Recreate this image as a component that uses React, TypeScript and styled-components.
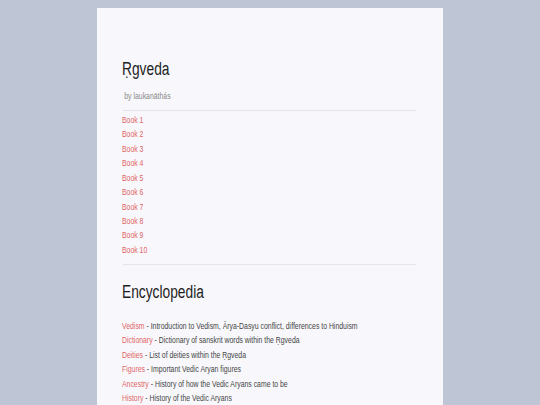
import styled, { createGlobalStyle, css } from "styled-components";

const GlobalStyle = createGlobalStyle`
  html, body {
    margin: 0;
    padding: 0;
    background: #bec5d4;
  }
  body {
    font-family: "Liberation Sans", Arial, sans-serif;
    color: #444;
  }
`;

// the type in this layout is set narrow, like a condensed face
const narrow = css`
  transform: scaleX(0.765);
  transform-origin: left center;
  white-space: nowrap;
`;

const books = Array.from({ length: 10 }, (_, i) => `Book ${i + 1}`);

const entries = [
  { name: "Vedism", text: "Introduction to Vedism, Ārya-Dasyu conflict, differences to Hinduism" },
  { name: "Dictionary", text: "Dictionary of sanskrit words within the Ṛgveda" },
  { name: "Deities", text: "List of deities within the Ṛgveda" },
  { name: "Figures", text: "Important Vedic Aryan figures" },
  { name: "Ancestry", text: "History of how the Vedic Aryans came to be" },
  { name: "History", text: "History of the Vedic Aryans" },
];

export default function App() {
  return (
    <>
      <GlobalStyle />
      <Page>
        <Card>
          <Title>Ṛgveda</Title>
          <Byline>by laukanāthás</Byline>
          <Rule />
          <List>
            {books.map((b) => (
              <Item key={b}>
                <LinkText href="#">{b}</LinkText>
              </Item>
            ))}
          </List>
          <Rule />
          <Heading>Encyclopedia</Heading>
          <EntryList>
            {entries.map((e) => (
              <Item key={e.name}>
                <LinkText href="#">{e.name}</LinkText> - {e.text}
              </Item>
            ))}
          </EntryList>
        </Card>
      </Page>
    </>
  );
}

const Page = styled.div`
  display: flex;
  padding: 8px 0 0 97px;
  min-height: 100vh;
  box-sizing: border-box;
`;

const Card = styled.div`
  width: 346px;
  box-sizing: border-box;
  background: #f8f8fc;
  padding: 50px 27px 40px 25px;
`;

const Title = styled.h1`
  ${narrow}
  margin: 0;
  font-size: 18px;
  line-height: 22px;
  font-weight: 400;
  color: #1e1e1e;
`;

const Heading = styled(Title)`
  margin-top: 16.4px;
`;

const Byline = styled.p`
  ${narrow}
  margin: 9px 0 0;
  padding-left: 3px;
  font-size: 9px;
  line-height: 14.4px;
  color: #888;
`;

const Rule = styled.hr`
  margin: 6.6px 0 0 1px;
  border: none;
  border-top: 1px solid #e4e4ea;
  height: 0;
`;

const List = styled.ul`
  list-style: none;
  margin: 1.8px 0 0;
  padding: 0;
  font-size: 9px;
  line-height: 14.45px;
`;

const EntryList = styled(List)`
  margin-top: 15.4px;
  color: #444;
`;

const Item = styled.li`
  ${narrow}
`;

const LinkText = styled.a`
  color: #e06464;
  text-decoration: none;
`;
